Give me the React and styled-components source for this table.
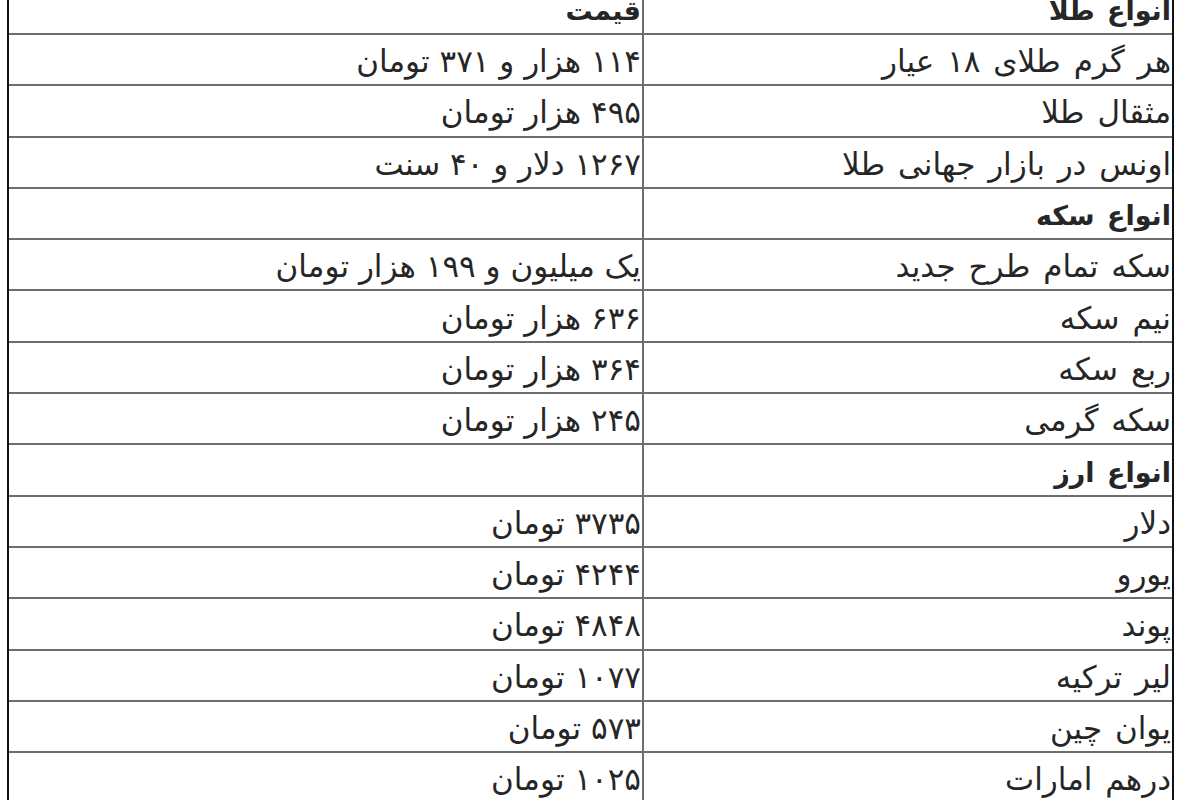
import React from "react";
import styled, { createGlobalStyle } from "styled-components";

const GlobalStyle = createGlobalStyle`
  html, body {
    margin: 0;
    padding: 0;
    background: #ffffff;
    overflow: hidden;
  }
`;

const Page = styled.div`
  width: 1200px;
  height: 800px;
  overflow: hidden;
  background: #ffffff;
`;

const Table = styled.div`
  direction: rtl;
  width: 1167px;
  margin: -16.3px 0 0 7px;
  border-left: 2px solid #111;
  border-right: 2px solid #111;
  box-sizing: border-box;
  font-family: "DejaVu Sans", Tahoma, sans-serif;
  color: #262626;
`;

const Row = styled.div`
  display: grid;
  grid-template-columns: 530px 1fr;
  height: 51.3px;
  box-sizing: border-box;
  border-bottom: 2px solid #6e6e6e;
`;

const Cell = styled.div`
  display: flex;
  align-items: center;
  justify-content: flex-start;
  padding: 4px 1px 0 0;
  font-size: ${(p) => (p.$head ? "27px" : "31px")};
  line-height: 1;
  letter-spacing: 0.3px;
  word-spacing: ${(p) => (p.$label ? "3px" : "0")};
  font-weight: ${(p) => (p.$head ? 700 : 400)};
  white-space: nowrap;
  overflow: hidden;
  ${(p) => p.$label && "border-left: 2px solid #6e6e6e;"}
`;

const rows = [
  { label: "انواع طلا", value: "قیمت", head: true },
  { label: "هر گرم طلای ۱۸ عیار", value: "۱۱۴ هزار و ۳۷۱ تومان" },
  { label: "مثقال طلا", value: "۴۹۵ هزار تومان" },
  { label: "اونس در بازار جهانی طلا", value: "۱۲۶۷ دلار و ۴۰ سنت" },
  { label: "انواع سکه", value: "", group: true },
  { label: "سکه تمام طرح جدید", value: "یک میلیون و ۱۹۹ هزار تومان" },
  { label: "نیم سکه", value: "۶۳۶ هزار تومان" },
  { label: "ربع سکه", value: "۳۶۴ هزار تومان" },
  { label: "سکه گرمی", value: "۲۴۵ هزار تومان" },
  { label: "انواع ارز", value: "", group: true },
  { label: "دلار", value: "۳۷۳۵ تومان" },
  { label: "یورو", value: "۴۲۴۴ تومان" },
  { label: "پوند", value: "۴۸۴۸ تومان" },
  { label: "لیر ترکیه", value: "۱۰۷۷ تومان" },
  { label: "یوان چین", value: "۵۷۳ تومان" },
  { label: "درهم امارات", value: "۱۰۲۵ تومان" },
];

export default function App() {
  return (
    <Page>
      <GlobalStyle />
      <Table>
        {rows.map((r, i) => (
          <Row key={i}>
            <Cell $label $head={r.head || r.group}>
              {r.label}
            </Cell>
            <Cell $head={r.head}>{r.value}</Cell>
          </Row>
        ))}
      </Table>
    </Page>
  );
}
